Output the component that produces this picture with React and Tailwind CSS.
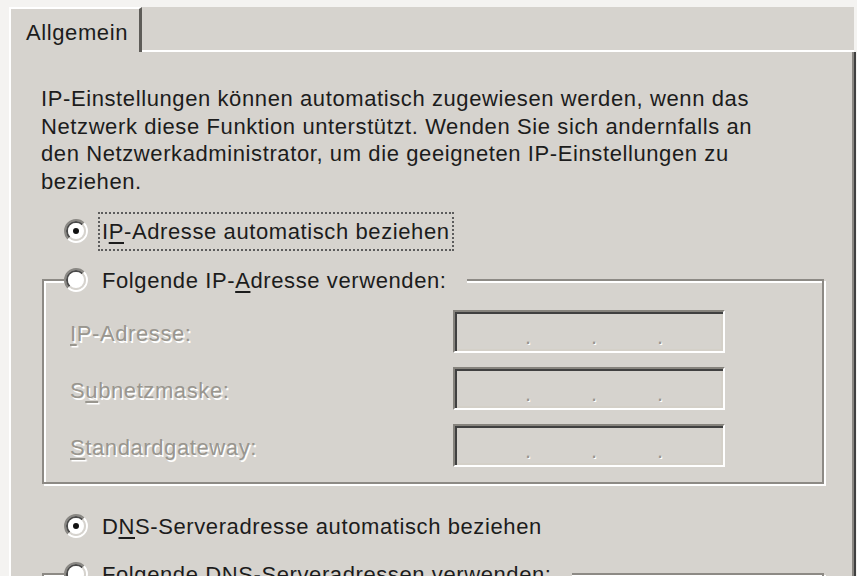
import React from "react";

const Radio = ({ checked }) => (
    <svg width="24" height="24" viewBox="0 0 12 12" className="shrink-0">
        <path d="M2.111 9.889A5.5 5.5 0 0 1 9.889 2.111" stroke="#8a8884" fill="none" />
        <path d="M9.889 2.111A5.5 5.5 0 0 1 2.111 9.889" stroke="#ffffff" fill="none" />
        <path d="M2.818 9.182A4.5 4.5 0 0 1 9.182 2.818" stroke="#4a4a4a" fill="none" />
        <path d="M9.182 2.818A4.5 4.5 0 0 1 2.818 9.182" stroke="#d6d3ce" fill="none" />
        <circle cx="6" cy="6" r="4" fill="#ffffff" />
        {checked && <circle cx="6" cy="6" r="1.5" fill="#111111" />}
    </svg>
);

const U = ({ children }) => (
    <u className="underline decoration-2 underline-offset-[3px]">{children}</u>
);

const RadioRow = ({ checked, focused, children }) => (
    <div className="flex items-center gap-[10px] h-[34px]">
        <Radio checked={checked} />
        <span
            className={
                "px-[2px] py-[1px] whitespace-nowrap border-2 border-dotted " +
                (focused ? "border-[#5c5c5c]" : "border-transparent")
            }
        >
            {children}
        </span>
    </div>
);

const IpField = ({ label }) => (
    <div className="flex items-center h-[43px]">
        <div className="w-[383px] pt-[3px] text-[#99968f] [text-shadow:1.5px_1.5px_0_#ffffff]">
            {label}
        </div>
        <div className="w-[272px] h-[43px] border-2 border-[#86837d] border-r-white border-b-white shadow-[inset_2px_2px_0_#404040,inset_-2px_-2px_0_#d4d0c8] flex items-end pb-[3px] pl-[70px] text-[#99968f] leading-none [text-shadow:1px_1px_0_#ffffff]">
            <span className="w-[66px]">.</span>
            <span className="w-[66px]">.</span>
            <span className="w-[66px]">.</span>
        </div>
    </div>
);

const App = () => {
    return (
        <div className="w-[857px] h-[576px] overflow-hidden bg-[#f4f3f1] pt-[7px] pl-[9px] pr-[3px] font-['Liberation_Sans',Arial,sans-serif] text-[22px] tracking-[0.6px] text-[#1c1c1c]">
            <div className="h-full bg-[#d6d3ce] flex flex-col">
                {/* tab strip */}
                <div className="flex h-[45px] shrink-0">
                    <div className="w-[133px] border-t-2 border-l-2 border-white border-r-[3px] border-r-[#5e5c58] pl-[15px] pt-[10px] leading-[27px]">
                        Allgemein
                    </div>
                    <div className="flex-1 border-b-2 border-white"></div>
                </div>

                {/* page */}
                <div className="flex-1 border-l-2 border-white border-r-2 border-r-[#8a8782] shadow-[2px_0_0_#404040] pl-[30px] pt-[33px] overflow-hidden">
                    <p className="leading-[27.5px] whitespace-nowrap">
                        IP-Einstellungen können automatisch zugewiesen werden, wenn das
                        <br />
                        Netzwerk diese Funktion unterstützt. Wenden Sie sich andernfalls an
                        <br />
                        den Netzwerkadministrator, um die geeigneten IP-Einstellungen zu
                        <br />
                        beziehen.
                    </p>

                    <div className="mt-[19px] ml-[23px]">
                        <RadioRow checked focused>
                            I<U>P</U>-Adresse automatisch beziehen
                        </RadioRow>
                    </div>

                    <fieldset className="mt-[15px] ml-[1px] w-[782px] border-2 border-[#8d8a85] shadow-[inset_2px_2px_0_#ffffff,2px_2px_0_#ffffff]">
                        <legend className="ml-[20px] pr-[16px] bg-[#d6d3ce]">
                            <RadioRow>
                                Folgende IP-<U>A</U>dresse verwenden:
                            </RadioRow>
                        </legend>
                        <div className="flex flex-col gap-[14px] pt-[13px] pb-[15px] pl-[26px]">
                            <IpField label={<><U>I</U>P-Adresse:</>} />
                            <IpField label={<>S<U>u</U>bnetzmaske:</>} />
                            <IpField label={<><U>S</U>tandardgateway:</>} />
                        </div>
                    </fieldset>

                    <div className="mt-[25px] ml-[23px]">
                        <RadioRow checked>
                            D<U>N</U>S-Serveradresse automatisch beziehen
                        </RadioRow>
                    </div>

                    <fieldset className="mt-[14px] ml-[1px] w-[782px] border-2 border-[#8d8a85] shadow-[inset_2px_2px_0_#ffffff,2px_2px_0_#ffffff]">
                        <legend className="ml-[20px] pr-[16px] bg-[#d6d3ce]">
                            <RadioRow>
                                Folgende DNS-Serveradressen verwenden:
                            </RadioRow>
                        </legend>
                        <div className="h-[200px]"></div>
                    </fieldset>
                </div>
            </div>
        </div>
    );
};

export default App;
